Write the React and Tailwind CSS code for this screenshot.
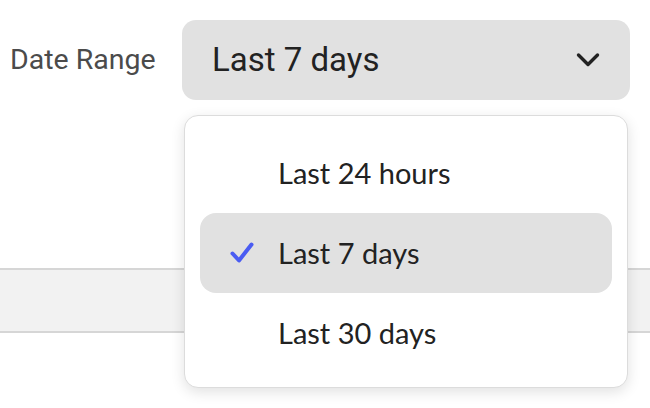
import React from "react";

const Chevron = () => (
  <svg width="24" height="16" viewBox="0 0 24 16" fill="none">
    <path d="M2.5 3l9.5 9.5L21.5 3" stroke="#222" strokeWidth="3.4" strokeLinecap="round" strokeLinejoin="round" />
  </svg>
);

const Check = () => (
  <svg width="24" height="22" viewBox="0 0 24 22" fill="none">
    <path d="M2.5 11.5l6.5 7L21.5 2.5" stroke="#4a5cf2" strokeWidth="4" strokeLinecap="round" strokeLinejoin="round" />
  </svg>
);

const options = ["Last 24 hours", "Last 7 days", "Last 30 days"];

export default function App() {
  const selected = "Last 7 days";

  return (
    <div className="relative h-[408px] w-[650px] overflow-hidden bg-white">
      {/* picker row */}
      <div className="flex items-center gap-[24px] pl-[10px] pt-[20px]">
        <span className="w-[148px] shrink-0 whitespace-nowrap text-[28.5px] text-[#4b4b4b] [font-family:Roboto,sans-serif]">Date Range</span>
        <button className="flex h-[80px] w-[448px] shrink-0 items-center justify-between rounded-[14px] bg-[#e1e1e1] pl-[30px] pr-[30px]">
          <span className="whitespace-nowrap text-[33px] text-[#222] [font-family:Roboto,sans-serif]">Last 7 days</span>
          <Chevron />
        </button>
      </div>

      {/* table header band behind the menu */}
      <div className="mt-[168px] h-[65px] border-y-2 border-[#d6d6d6] bg-[#f2f2f2]" />

      {/* menu */}
      <div className="absolute left-[184px] top-[115px] flex h-[273px] w-[444px] flex-col rounded-[14px] border border-[#dcdcdc] bg-white px-[15px] pt-[17px] shadow-[0_4px_14px_rgba(0,0,0,0.12)]">
        {options.map((opt) => (
          <div
            key={opt}
            className={
              opt === selected
                ? "flex h-[80px] items-center rounded-[16px] bg-[#e1e1e1]"
                : "flex h-[80px] items-center rounded-[16px]"
            }
          >
            <div className="flex w-[78px] justify-center pl-[6px]">{opt === selected && <Check />}</div>
            <span className="whitespace-nowrap text-[29px] text-[#222] [font-family:Lato,sans-serif]">{opt}</span>
          </div>
        ))}
      </div>
    </div>
  );
}
